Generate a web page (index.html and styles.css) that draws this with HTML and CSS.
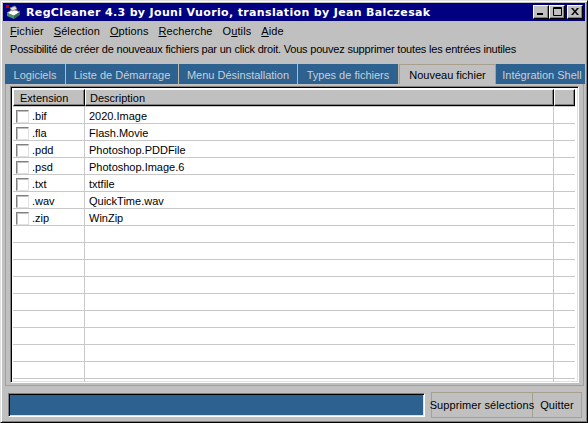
FILE: index.html
```html
<!DOCTYPE html>
<html>
<head>
<meta charset="utf-8">
<link rel="stylesheet" href="styles.css">
</head>
<body>
<div class="window">
  <div class="titlebar">
    <svg class="appicon" width="16" height="16" viewBox="0 0 16 16">
      <rect x="1" y="1" width="3" height="3" fill="#c00000"/>
      <path d="M2 9 L8 5 L15 8 L9 12 Z" fill="#ffffff" stroke="#808080" stroke-width="1"/>
      <path d="M2 9 L9 12 L9 15 L2 12 Z" fill="#3c9a6c"/>
      <path d="M9 12 L15 8 L15 11 L9 15 Z" fill="#2a7050"/>
      <path d="M5 4 L10 2 L12 5 L7 7 Z" fill="#e0e0e0" stroke="#808080" stroke-width="0.8"/>
    </svg>
    <span class="title">RegCleaner 4.3 by Jouni Vuorio, translation by Jean Balczesak</span>
    <div class="wbtns">
      <span class="wbtn"><svg width="8" height="7" viewBox="0 0 8 7"><rect x="0" y="5" width="6" height="2" fill="#000"/></svg></span>
      <span class="wbtn"><svg width="9" height="9" viewBox="0 0 9 9"><path d="M0.5 0.5 H8.5 V8.5 H0.5 Z M0.5 1.5 H8.5" fill="none" stroke="#000" stroke-width="1"/></svg></span>
      <span class="wbtn wclose"><svg width="8" height="7" viewBox="0 0 8 7"><path d="M0 0 L2 0 L4 2.5 L6 0 L8 0 L5 3.5 L8 7 L6 7 L4 4.5 L2 7 L0 7 L3 3.5 Z" fill="#000"/></svg></span>
    </div>
  </div>
  <div class="menubar">
    <span class="mi"><u>F</u>ichier</span>
    <span class="mi"><u>S</u>élection</span>
    <span class="mi"><u>O</u>ptions</span>
    <span class="mi"><u>R</u>echerche</span>
    <span class="mi">O<u>u</u>tils</span>
    <span class="mi"><u>A</u>ide</span>
  </div>
  <div class="info">Possibilité de créer de nouveaux fichiers par un click droit. Vous pouvez supprimer toutes les entrées inutiles</div>
  <div class="tabs">
    <span class="tab t1">Logiciels</span>
    <span class="tab t2">Liste de Démarrage</span>
    <span class="tab t3">Menu Désinstallation</span>
    <span class="tab t4">Types de fichiers</span>
    <span class="tab t5 active">Nouveau fichier</span>
    <span class="tab t6">Intégration Shell</span>
  </div>
  <div class="panel">
    <div class="list">
      <div class="row head">
        <div class="c c1"><span class="htxt">Extension</span></div>
        <div class="c c2"><span class="htxt">Description</span></div>
        <div class="c c3"></div>
      </div>
      <div class="row"><div class="c c1"><span class="cb"></span>.bif</div><div class="c c2">2020.Image</div><div class="c c3"></div></div>
      <div class="row"><div class="c c1"><span class="cb"></span>.fla</div><div class="c c2">Flash.Movie</div><div class="c c3"></div></div>
      <div class="row"><div class="c c1"><span class="cb"></span>.pdd</div><div class="c c2">Photoshop.PDDFile</div><div class="c c3"></div></div>
      <div class="row"><div class="c c1"><span class="cb"></span>.psd</div><div class="c c2">Photoshop.Image.6</div><div class="c c3"></div></div>
      <div class="row"><div class="c c1"><span class="cb"></span>.txt</div><div class="c c2">txtfile</div><div class="c c3"></div></div>
      <div class="row"><div class="c c1"><span class="cb"></span>.wav</div><div class="c c2">QuickTime.wav</div><div class="c c3"></div></div>
      <div class="row"><div class="c c1"><span class="cb"></span>.zip</div><div class="c c2">WinZip</div><div class="c c3"></div></div>
      <div class="row"><div class="c c1"></div><div class="c c2"></div><div class="c c3"></div></div>
      <div class="row"><div class="c c1"></div><div class="c c2"></div><div class="c c3"></div></div>
      <div class="row"><div class="c c1"></div><div class="c c2"></div><div class="c c3"></div></div>
      <div class="row"><div class="c c1"></div><div class="c c2"></div><div class="c c3"></div></div>
      <div class="row"><div class="c c1"></div><div class="c c2"></div><div class="c c3"></div></div>
      <div class="row"><div class="c c1"></div><div class="c c2"></div><div class="c c3"></div></div>
      <div class="row"><div class="c c1"></div><div class="c c2"></div><div class="c c3"></div></div>
      <div class="row"><div class="c c1"></div><div class="c c2"></div><div class="c c3"></div></div>
      <div class="row"><div class="c c1"></div><div class="c c2"></div><div class="c c3"></div></div>
      <div class="row"><div class="c c1"></div><div class="c c2"></div><div class="c c3"></div></div>
    </div>
  </div>
  <div class="bottom">
    <div class="progress"></div>
    <div class="btn b1">Supprimer sélections</div>
    <div class="btn b2">Quitter</div>
  </div>
</div>
</body>
</html>
```

FILE: styles.css
```css
* { box-sizing: border-box; }
html, body { margin: 0; padding: 0; }
body {
  width: 588px;
  height: 423px;
  overflow: hidden;
  background: #c0c0c0;
  font-family: "Liberation Sans", Arial, sans-serif;
  font-size: 11px;
  color: #000;
}
.window {
  width: 588px;
  height: 423px;
  background: #c0c0c0;
  border-top: 1px solid #dfdfdf;
  border-left: 1px solid #dfdfdf;
  border-right: 1px solid #000;
  border-bottom: 1px solid #000;
  box-shadow: inset 1px 1px 0 #fff, inset -1px -1px 0 #808080;
  padding: 2px;
  display: flex;
  flex-direction: column;
}
.titlebar {
  height: 18px;
  background: #000080;
  display: flex;
  align-items: center;
  padding-left: 2px;
  padding-right: 2px;
}
.appicon { flex: none; }
.title {
  color: #fff;
  font-family: "DejaVu Sans", Verdana, sans-serif;
  font-weight: bold;
  font-size: 11px;
  letter-spacing: 0.35px;
  margin-left: 5px;
  white-space: nowrap;
  flex: 1;
}
.wbtns { display: flex; align-items: center; }
.wbtn {
  width: 16px;
  height: 14px;
  background: #c0c0c0;
  border-top: 1px solid #fff;
  border-left: 1px solid #fff;
  border-right: 1px solid #000;
  border-bottom: 1px solid #000;
  box-shadow: inset -1px -1px 0 #808080;
  display: flex;
  align-items: center;
  justify-content: center;
  padding-bottom: 1px;
}
.wclose { margin-left: 2px; }
.menubar {
  height: 19px;
  display: flex;
  align-items: center;
  padding-left: 7px;
  gap: 10px;
  font-size: 11px;
  letter-spacing: 0.1px;
}
.mi { white-space: nowrap; }
.info {
  height: 20px;
  padding-left: 7px;
  padding-top: 3px;
  white-space: nowrap;
  font-size: 11px;
  letter-spacing: -0.2px;
}
.tabs {
  margin-top: 4px;
  margin-left: 2px;
  display: flex;
  height: 20px;
}
.tab {
  background: #2d6190;
  color: #c8d0d8;
  font-size: 11px;
  display: flex;
  align-items: center;
  justify-content: center;
  border-right: 1px solid #c0b8a8;
  white-space: nowrap;
  padding-top: 1px;
}
.tab.active {
  background: #c0c0c0;
  color: #000;
  border: 1px solid #a8a08c;
  border-bottom: none;
}
.t1 { width: 61px; }
.t2 { width: 113px; }
.t3 { width: 119px; }
.t4 { width: 101px; }
.t5 { width: 97px; }
.t6 { width: 89px; border-right: none; padding-left: 3px; }
.panel {
  margin-left: 2px;
  margin-right: 1px;
  height: 302px;
  border: 1px solid #a8a08c;
  border-top: none;
  padding: 2px 4px 0 4px;
}
.list {
  height: 297px;
  border-top: 1px solid #808080;
  border-left: 1px solid #808080;
  border-right: 1px solid #fff;
  border-bottom: 1px solid #fff;
  box-shadow: inset 1px 1px 0 #000, inset -1px -1px 0 #dfdfdf;
  padding: 2px 3px 2px 2px;
  background: #fff;
  overflow: hidden;
}
.row {
  display: flex;
  height: 17px;
  border-bottom: 1px solid #c8c8c8;
}
.c {
  height: 100%;
  display: flex;
  align-items: center;
  border-right: 1px solid #c8c8c8;
  white-space: nowrap;
  padding-top: 2px;
}
.c1 { width: 72px; padding-left: 3px; }
.c2 { width: 469px; padding-left: 4px; }
.c3 { flex: 1; border-right: none; }
.row.head {
  height: 18px;
  border-bottom: 1px solid #c8c8c8;
}
.head .c {
  background: #c0c0c0;
  border-top: 1px solid #fff;
  border-left: 1px solid #fff;
  border-right: 1px solid #000;
  border-bottom: 1px solid #000;
  box-shadow: inset -1px -1px 0 #808080;
  padding-top: 0;
  height: 17px;
}
.head .c1 { padding-left: 6px; }
.head .c2 { padding-left: 4px; }
.cb {
  display: inline-block;
  width: 13px;
  height: 13px;
  border-top: 1px solid #808080;
  border-left: 1px solid #808080;
  border-right: 1px solid #e0e0e0;
  border-bottom: 1px solid #e0e0e0;
  box-shadow: inset 1px 1px 0 #c0c0c0;
  background: #fff;
  margin-right: 3px;
}
.bottom {
  flex: 1;
  display: flex;
  align-items: center;
  padding: 3px 3px 0 5px;
}
.progress {
  width: 417px;
  height: 24px;
  background: #2d6190;
  border-top: 1px solid #808080;
  border-left: 1px solid #808080;
  border-right: 1px solid #fff;
  border-bottom: 1px solid #fff;
  box-shadow: inset 1px 1px 0 #000, inset -1px -1px 0 #dfdfdf;
  margin-right: 6px;
}
.btn {
  height: 26px;
  border: 1px solid #a8a08c;
  display: flex;
  align-items: center;
  justify-content: center;
  font-size: 11px;
  letter-spacing: 0.1px;
  white-space: nowrap;
}
.b1 { width: 102px; }
.b2 { width: 49px; border-left: none; }
```
